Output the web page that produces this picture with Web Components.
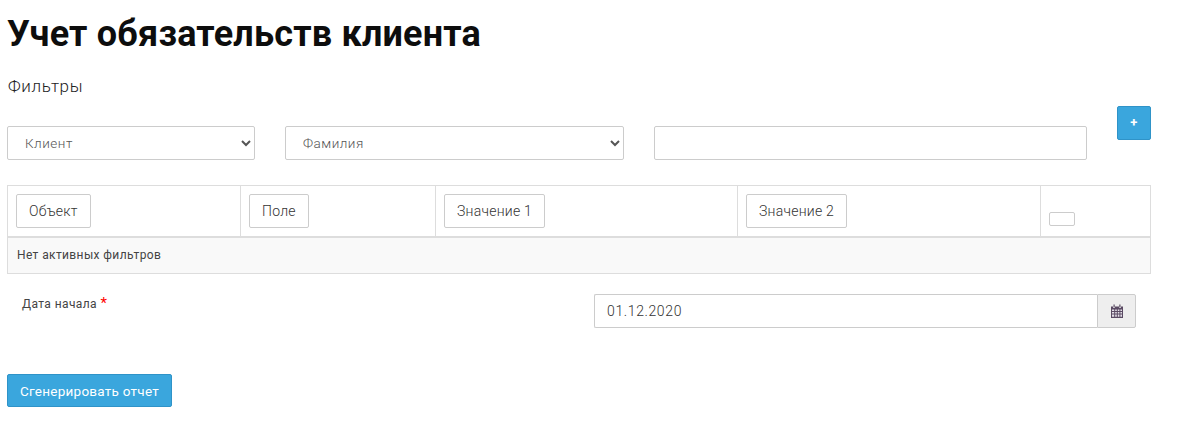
<!DOCTYPE html>
<html lang="ru"><head><meta charset="utf-8"><title>Учет обязательств клиента</title>
<style>html,body{margin:0;background:#fff}body{font-family:Roboto,"Liberation Sans",sans-serif}</style>
</head><body>
<report-page></report-page>
<script>
const def=(name,html,init)=>customElements.define(name,class extends HTMLElement{
  constructor(){super();this.attachShadow({mode:'open'}).innerHTML=html;}
  connectedCallback(){init&&init(this)}
});
def('ui-btn',`<style>
:host{display:inline-flex}
button{font:300 14px/20px Roboto,sans-serif;color:#333;background:#fff;border:1px solid #ccc;border-radius:2px;padding:6px 12px;height:34px;margin:0;box-sizing:border-box;letter-spacing:.25px}
:host([primary]) button{background:#3aa6dd;border-color:#2f93c8;color:#fff;font-weight:400;font-size:13.5px}
:host([empty]) button{height:14px;width:26px;padding:0}
:host([plus]) button{width:34px;padding:0;font-size:13px;font-weight:700;line-height:30px;}
:host([gen]) button{height:33px;padding:0;width:165px;white-space:nowrap;letter-spacing:.26px}
</style><button type="button"><slot></slot></button>`);
def('ui-select',`<style>
:host{display:block}
select{width:100%;height:34px;box-sizing:border-box;font:300 13.5px Roboto,sans-serif;color:#555;background:#fff;border:1px solid #ccc;border-radius:2px;padding:0 12px 0 13px;margin:0;letter-spacing:.5px}
</style><select></select>`,el=>{const s=el.shadowRoot.querySelector('select');s.innerHTML=`<option>${el.getAttribute('value')}</option>`});
def('filter-row',`<style>
:host{display:grid;grid-template-columns:248px 339px 433px 34px;column-gap:30px;align-items:start;margin-top:10px}
.c{margin-top:20px}
input{display:block;width:100%;height:34px;box-sizing:border-box;border:1px solid #ccc;border-radius:2px;margin:0;background:#fff}
</style>
<div class="c"><ui-select value="Клиент"></ui-select></div>
<div class="c"><ui-select value="Фамилия"></ui-select></div>
<div class="c"><input aria-label="Значение"></div>
<ui-btn primary plus>+</ui-btn>`);
def('filter-table',`<style>
:host{display:block;width:1144px;box-sizing:border-box;border:1px solid #ddd;margin-top:25px;font:12px/16px Roboto,sans-serif;color:#444}
.head{display:grid;grid-template-columns:232px 195px 302px 303px 1fr;border-bottom:2px solid #ddd;height:52px;box-sizing:border-box}
.cell{padding:8px;box-sizing:border-box;border-left:1px solid #ddd}
.cell:first-child{border-left:0}
.last{padding-top:26px}
.foot{background:#f9f9f9;height:35px;padding:9px;box-sizing:border-box;letter-spacing:.38px}
</style>
<div class="head">
<div class="cell"><ui-btn>Объект</ui-btn></div>
<div class="cell"><ui-btn>Поле</ui-btn></div>
<div class="cell"><ui-btn>Значение 1</ui-btn></div>
<div class="cell"><ui-btn>Значение 2</ui-btn></div>
<div class="cell last"><ui-btn empty></ui-btn></div>
</div>
<div class="foot">Нет активных фильтров</div>`);
def('date-field',`<style>
:host{display:grid;grid-template-columns:587px 503px 39px;margin-top:20px;font-family:Roboto,sans-serif}
label{font-size:12px;line-height:18px;color:#444;padding:0 0 0 15px;letter-spacing:.4px}
label b{color:#f00;font-weight:400;font-size:15px}
input{height:34px;box-sizing:border-box;width:100%;border:1px solid #ccc;border-right:0;border-radius:2px 0 0 2px;padding:0 12px;font:300 14px Roboto,sans-serif;color:#333;letter-spacing:.62px;margin:0;background:#fff}
.add{height:34px;box-sizing:border-box;border:1px solid #ccc;background:#eee;border-radius:0 2px 2px 0;display:flex;align-items:center;justify-content:center}
</style>
<label>Дата начала <b>*</b></label>
<input value="01.12.2020" aria-label="Дата начала">
<div class="add"><svg width="14" height="14" viewBox="0 0 14 14"><path fill="#5a4a63" d="M1 2.500h2V4h2V2.500h4V4h2V2.500h2V14H1z"/><path fill="#e4dfe8" d="M2 5.500h2.200v1.600H2zM5.200 5.500h1.600v1.600H5.200zM7.800 5.500h1.600v1.600H7.800zM10.400 5.500H12v1.600h-1.600zM2 8h2.200v1.600H2zM5.200 8h1.600v1.600H5.200zM7.800 8h1.600v1.600H7.800zM10.400 8H12v1.600h-1.600zM2 10.500h2.200v2.300H2zM5.200 10.500h1.600v2.300H5.200zM7.800 10.500h1.600v2.300H7.800zM10.400 10.500H12v2.300h-1.600z"/><path fill="#5a4a63" d="M3.500 .5h1.200v3H3.500zM9.300 .5h1.200v3H9.300z"/></svg></div>`);
def('report-page',`<style>
:host{display:block;padding:0 7px;box-sizing:border-box;width:1179px;height:422px;overflow:hidden}
h1{margin:0;padding-top:12px;font:700 36px/44px Roboto,sans-serif;color:#0d0d0d;letter-spacing:.2px}
h2{margin:20px 0 0 1px;font:300 17px/20px Roboto,sans-serif;color:#222;letter-spacing:.65px}
.act{margin-top:46px}
</style>
<h1>Учет обязательств клиента</h1>
<h2>Фильтры</h2>
<filter-row></filter-row>
<filter-table></filter-table>
<date-field></date-field>
<div class="act"><ui-btn primary gen>Сгенерировать отчет</ui-btn></div>`);
</script>
</body></html>
